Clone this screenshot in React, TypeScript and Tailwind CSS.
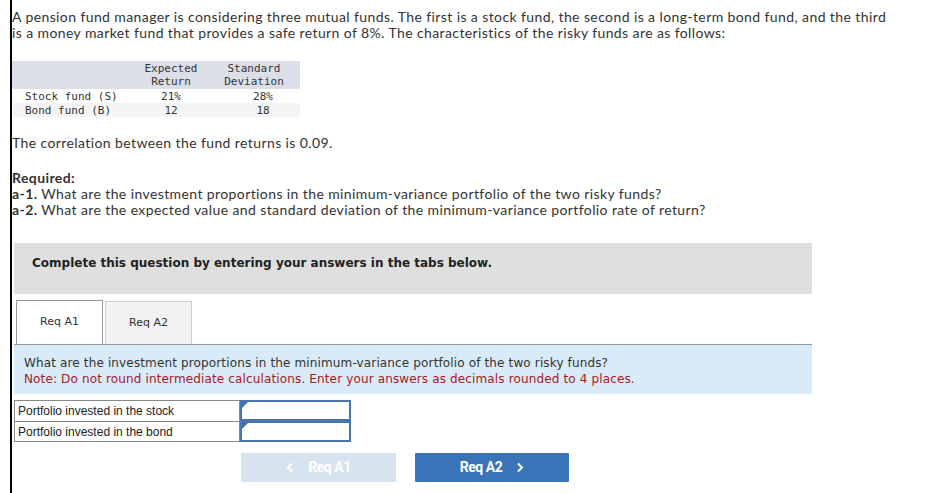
import React from 'react';

const Chevron = ({ dir }: { dir: 'left' | 'right' }) => (
  <svg width="8" height="11" viewBox="0 0 8 11" className="shrink-0">
    <path
      d={dir === 'left' ? 'M6 1.5 L2 5.5 L6 9.5' : 'M2 1.5 L6 5.5 L2 9.5'}
      fill="none"
      stroke="currentColor"
      strokeWidth="2"
    />
  </svg>
);

const AnswerRow = ({ label, last }: { label: string; last?: boolean }) => (
  <div className="flex">
    <div
      className={`w-[226px] h-[21px] border-l border-r border-t border-[#888] ${last ? 'border-b' : ''} pl-[3px] flex items-center text-[12px] text-[#222]`}
      style={{ fontFamily: '"Liberation Sans", Arial, sans-serif' }}
    >
      {label}
    </div>
    <div className="relative w-[111px] h-[21px] border-2 border-[#4a76ad] bg-white">
      <div className="absolute left-0 top-0 w-0 h-0 border-t-[6px] border-t-[#3b6fb0] border-r-[6px] border-r-transparent" />
    </div>
  </div>
);

export default function App() {
  return (
    <div className="w-[927px] h-[493px] bg-white overflow-hidden">
      <div className="ml-[10px] h-[493px] border-l-2 border-black">
        <div
          className="pt-[9px] w-[880px] text-[14px] leading-[16px] tracking-[0.4px] text-[#333]"
          style={{ fontFamily: 'Lato, "Open Sans", sans-serif' }}
        >
          <p>
            A pension fund manager is considering three mutual funds. The first is a stock fund, the second is a long-term bond fund, and the third is a money market fund that provides a safe return of 8%. The characteristics of the risky funds are as follows:
          </p>
        </div>

        <div
          className="mt-[20px] w-[288px] text-[11px] leading-[13px] text-[#333]"
          style={{ fontFamily: '"DejaVu Sans Mono", "Liberation Mono", monospace' }}
        >
          <div className="flex bg-[#dcdfe8] h-[28px] items-center">
            <div className="w-[128px]" />
            <div className="w-[62px] text-center">Expected<br />Return</div>
            <div className="w-[98px] text-center pl-[6px]">Standard<br />Deviation</div>
          </div>
          <div className="flex h-[14px] items-center bg-white">
            <div className="w-[128px] pl-[13px]">Stock fund (S)</div>
            <div className="w-[62px] text-center">21%</div>
            <div className="w-[98px] text-center pl-[24px]">28%</div>
          </div>
          <div className="flex h-[14px] items-center bg-[#f5f5f5]">
            <div className="w-[128px] pl-[13px]">Bond fund (B)</div>
            <div className="w-[62px] text-center">12</div>
            <div className="w-[98px] text-center pl-[24px]">18</div>
          </div>
        </div>

        <div
          className="text-[14px] leading-[16px] tracking-[0.4px] text-[#333]"
          style={{ fontFamily: 'Lato, "Open Sans", sans-serif' }}
        >
          <p className="mt-[18px]">The correlation between the fund returns is 0.09.</p>
          <p className="mt-[19px] font-bold">Required:</p>
          <p>
            <span className="font-bold">a-1.</span> What are the investment proportions in the minimum-variance portfolio of the two risky funds?
          </p>
          <p>
            <span className="font-bold">a-2.</span> What are the expected value and standard deviation of the minimum-variance portfolio rate of return?
          </p>
        </div>

        <div style={{ fontFamily: '"DejaVu Sans", Verdana, sans-serif' }}>
          <div className="ml-[2px] mt-[25px] w-[798px] h-[51px] bg-[#dfdfdf] pl-[18px] pt-[11px] text-[12px] font-bold text-[#222]">
            Complete this question by entering your answers in the tabs below.
          </div>

          <div className="ml-[4px] mt-[6px] flex items-end gap-[2px]">
            <div className="w-[87px] h-[44px] bg-white border border-b-0 border-[#999] flex items-center justify-center text-[11px] text-[#333]">
              Req A1
            </div>
            <div className="w-[87px] h-[43px] bg-[#f2f2f2] border border-b-0 border-[#ccc] flex items-center justify-center text-[11px] text-[#333]">
              Req A2
            </div>
          </div>

          <div className="ml-[2px] w-[798px] h-[50px] bg-[#d9eaf8] border-t border-[#999] pl-[10px] pt-[10px] text-[12px] leading-[16px] tracking-[0.14px]">
            <p className="text-[#333]">What are the investment proportions in the minimum-variance portfolio of the two risky funds?</p>
            <p className="text-[#a5201e]">Note: Do not round intermediate calculations. Enter your answers as decimals rounded to 4 places.</p>
          </div>

          <div className="ml-[2px] mt-[6px]">
            <AnswerRow label="Portfolio invested in the stock" />
            <AnswerRow label="Portfolio invested in the bond" last />
          </div>

          <div
            className="ml-[229px] mt-[11px] flex gap-[19px] text-[14px] font-bold tracking-[-0.5px]"
            style={{ fontFamily: 'Roboto, "Liberation Sans", sans-serif' }}
          >
            <div className="w-[155px] h-[29px] bg-[#d8e3f0] text-white flex items-center justify-center gap-[14px] rounded-[1px]">
              <Chevron dir="left" />
              <span>Req A1</span>
            </div>
            <div className="w-[154px] h-[29px] bg-[#3a74b8] text-white flex items-center justify-center gap-[14px] rounded-[1px]">
              <span>Req A2</span>
              <Chevron dir="right" />
            </div>
          </div>
        </div>
      </div>
    </div>
  );
}
